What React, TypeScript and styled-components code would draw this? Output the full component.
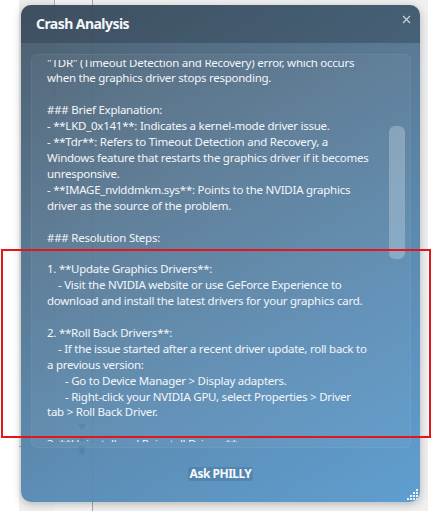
import React, { useLayoutEffect, useRef } from 'react';
import styled, { createGlobalStyle } from 'styled-components';

const GlobalStyle = createGlobalStyle`
  html, body {
    margin: 0;
    padding: 0;
    background: #ffffff;
    overflow: hidden;
  }
  * {
    box-sizing: border-box;
  }
`;

interface Line {
  text: string;
  indent?: number;
}

/** analysis text, one entry per visual line */
const lines: Line[] = [
  { text: '### Summary:' },
  { text: 'The crash was caused by a **LKD_0x141** live kernel event,' },
  { text: 'which indicates a video engine timeout. This is a GPU hang,' },
  { text: 'usually in the graphics driver. The stop code points to a' },
  { text: 'Video TDR failure, commonly referred to as a' },
  { text: '"TDR" (Timeout Detection and Recovery) error, which occurs' },
  { text: 'when the graphics driver stops responding.' },
  { text: '' },
  { text: '### Brief Explanation:' },
  { text: '- **LKD_0x141**: Indicates a kernel-mode driver issue.' },
  { text: '- **Tdr**: Refers to Timeout Detection and Recovery, a' },
  { text: 'Windows feature that restarts the graphics driver if it becomes' },
  { text: 'unresponsive.' },
  { text: '- **IMAGE_nvlddmkm.sys**: Points to the NVIDIA graphics' },
  { text: 'driver as the source of the problem.' },
  { text: '' },
  { text: '### Resolution Steps:' },
  { text: '' },
  { text: '1. **Update Graphics Drivers**:' },
  { text: '- Visit the NVIDIA website or use GeForce Experience to', indent: 11 },
  { text: 'download and install the latest drivers for your graphics card.' },
  { text: '' },
  { text: '2. **Roll Back Drivers**:' },
  { text: '- If the issue started after a recent driver update, roll back to', indent: 11 },
  { text: 'a previous version:' },
  { text: '- Go to Device Manager > Display adapters.', indent: 18 },
  { text: '- Right-click your NVIDIA GPU, select Properties > Driver', indent: 18 },
  { text: 'tab > Roll Back Driver.' },
  { text: '' },
  { text: '3. **Uninstall and Reinstall Drivers**:' },
  { text: '- Use Display Driver Uninstaller (DDU) in Safe Mode to', indent: 11 },
  { text: 'remove the current driver completely.' },
];

const App = () => {
  const viewRef = useRef<HTMLDivElement>(null);

  useLayoutEffect(() => {
    if (viewRef.current) viewRef.current.scrollTop = 85;
  }, []);

  return (
    <Stage>
      <GlobalStyle />
      <Backdrop>
        <SideColumn />
        <ToolColumn>
          <ArrowMark />
          <ArrowMark $up />
          <ArrowMark />
          <ArrowMark $tight />
        </ToolColumn>
        <MainArea />
      </Backdrop>

      <Dialog>
        <TitleBar>
          <Title>Crash Analysis</Title>
          <CloseButton aria-label="Close">
            <svg width="9" height="9" viewBox="0 0 9 9">
              <path d="M1 1L8 8M8 1L1 8" stroke="currentColor" strokeWidth="1.2" />
            </svg>
          </CloseButton>
        </TitleBar>

        <Panel>
          <Viewport ref={viewRef}>
            <Content>
              {lines.map((line, i) => (
                <TextLine key={i} $indent={line.indent || 0}>
                  {line.text || '\u00a0'}
                </TextLine>
              ))}
            </Content>
          </Viewport>
          <ScrollThumb />
        </Panel>

        <Footer>
          <AskButton>Ask PHILLY</AskButton>
        </Footer>

        <Grip>
          <svg width="12" height="12" viewBox="0 0 12 12">
            {[
              [9, 0],
              [6, 3], [9, 3],
              [3, 6], [6, 6], [9, 6],
              [0, 9], [3, 9], [6, 9], [9, 9],
            ].map(([x, y], i) => (
              <rect key={i} x={x} y={y} width="2" height="2" fill="#eef4fa" />
            ))}
          </svg>
        </Grip>
      </Dialog>

      <Highlight />
    </Stage>
  );
};

const Stage = styled.div`
  position: relative;
  width: 431px;
  height: 511px;
  overflow: hidden;
  font-family: 'Segoe UI', 'Noto Sans', sans-serif;
`;

const Backdrop = styled.div`
  margin-left: 19px;
  width: 409px;
  height: 511px;
  background: #f0f0f0;
  display: grid;
  grid-template-columns: 36px 38px 1fr;
`;

const SideColumn = styled.div`
  background: #ececec;
  border-right: 1px solid #b4b4b4;
  border-bottom: 1px solid #b4b4b4;
  height: 447px;
`;

const ToolColumn = styled.div`
  display: flex;
  flex-direction: column;
  align-items: flex-end;
  gap: 5px;
  padding: 424px 6px 0 0;
  background: #f4f4f4;
  border-right: 1px solid #a8a8a8;
`;

const ArrowMark = styled.div<{ $up?: boolean; $tight?: boolean }>`
  width: 0;
  height: 0;
  margin-top: ${(p) => (p.$tight ? '-7px' : '0')};
  border-left: 4px solid transparent;
  border-right: 4px solid transparent;
  ${(p) =>
    p.$up ? 'border-bottom: 6px solid #6b6b6b;' : 'border-top: 6px solid #6b6b6b;'}
`;

const MainArea = styled.div`
  background: #f0f0f0;
`;

const Dialog = styled.div`
  position: absolute;
  left: 21px;
  top: 5px;
  width: 399px;
  height: 497px;
  border-radius: 10px;
  overflow: hidden;
  display: flex;
  flex-direction: column;
  background: linear-gradient(
    150deg,
    rgba(64, 84, 102, 0.93) 0%,
    rgba(78, 112, 140, 0.93) 35%,
    rgba(82, 135, 178, 0.93) 70%,
    rgba(84, 152, 206, 0.93) 100%
  );
  box-shadow: 0 2px 8px rgba(0, 0, 0, 0.25);
  color: #f2f6f9;
`;

const TitleBar = styled.div`
  height: 38px;
  flex-shrink: 0;
  display: flex;
  align-items: center;
  justify-content: space-between;
  padding: 0 8px 0 15px;
  background: rgba(40, 56, 70, 0.38);
`;

const Title = styled.div`
  font-size: 14px;
  font-weight: 700;
  color: #f4f6f8;
  letter-spacing: -0.55px;
  margin-top: -1px;
`;

const CloseButton = styled.div`
  align-self: flex-start;
  margin-top: 8px;
  width: 12px;
  height: 12px;
  display: flex;
  align-items: center;
  justify-content: center;
  color: #c9d3dc;
`;

const Panel = styled.div`
  position: relative;
  margin: 11px 9px 0 10px;
  height: 394px;
  padding: 5px 0;
  border-radius: 6px;
  background: rgba(255, 255, 255, 0.045);
  border: 1px solid rgba(255, 255, 255, 0.05);
`;

const Viewport = styled.div`
  height: 100%;
  overflow: hidden;
`;

const Content = styled.div`
  padding: 0 40px 8px 15px;
  font-size: 11.5px;
  letter-spacing: -0.25px;
  line-height: 15.9px;
  color: #f3f6f9;
`;

const TextLine = styled.div<{ $indent: number }>`
  white-space: nowrap;
  padding-left: ${(p) => p.$indent}px;
`;

const ScrollThumb = styled.div`
  position: absolute;
  right: 5px;
  top: 71px;
  width: 16px;
  height: 133px;
  border-radius: 6px;
  background: rgba(200, 215, 228, 0.38);
`;

const Footer = styled.div`
  flex: 1;
  display: flex;
  align-items: center;
  justify-content: center;
  padding-bottom: 2px;
`;

const AskButton = styled.div`
  padding: 0 2px;
  height: 14px;
  line-height: 14px;
  border-radius: 3px;
  background: rgba(40, 80, 120, 0.22);
  font-size: 12px;
  font-weight: 700;
  letter-spacing: -0.5px;
  color: #f6f8fa;
`;

const Grip = styled.div`
  position: absolute;
  right: 1px;
  bottom: 1px;
  width: 12px;
  height: 12px;
  line-height: 0;
`;

const Highlight = styled.div`
  position: absolute;
  left: 1px;
  top: 249px;
  width: 430px;
  height: 189px;
  border: 2px solid #e3171b;
  pointer-events: none;
`;

export default App;
